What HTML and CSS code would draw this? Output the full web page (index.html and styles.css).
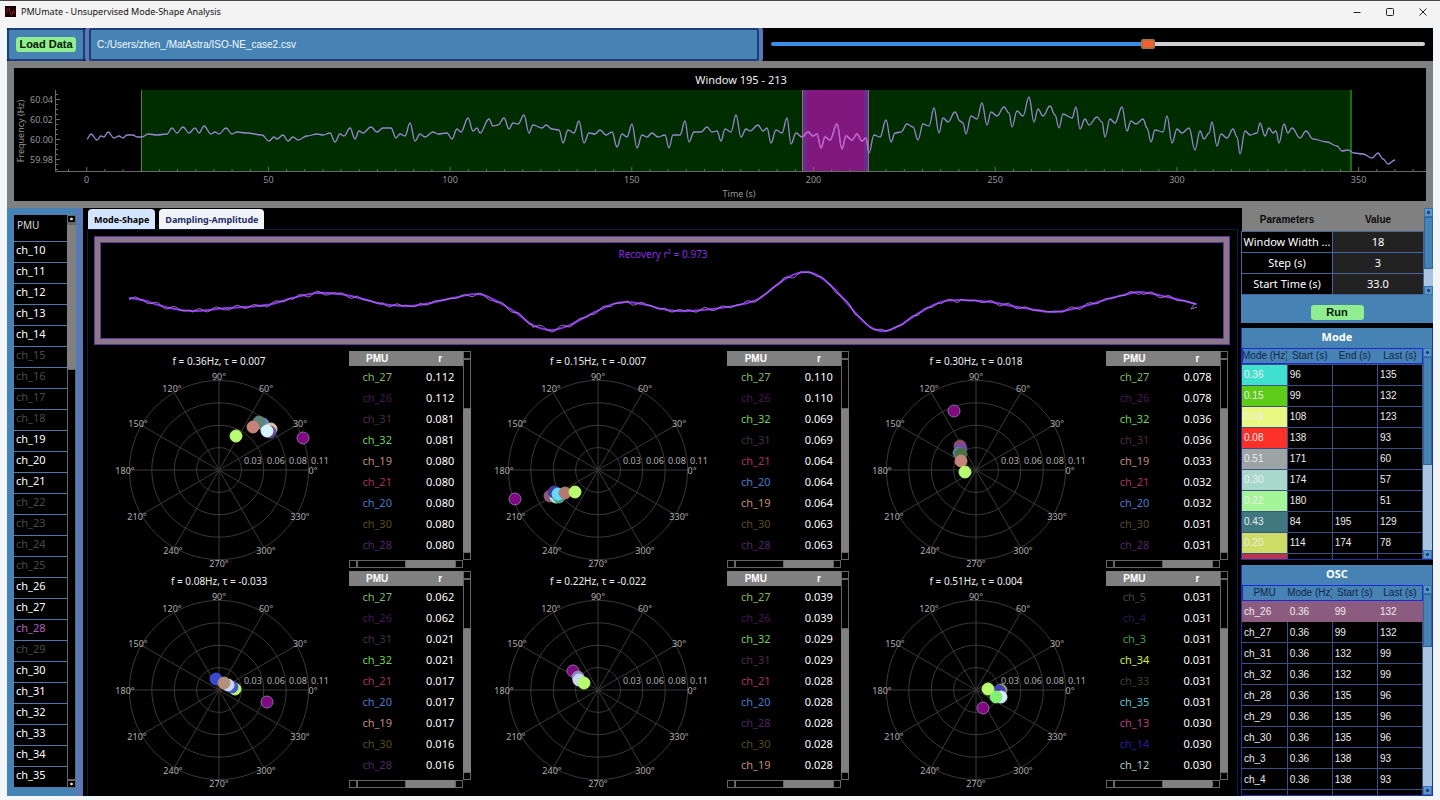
FILE: index.html
```html
<!DOCTYPE html>
<html lang="en">
<head>
<meta charset="UTF-8">
<meta name="viewport" content="width=device-width, initial-scale=1.0">
<title>PMUmate - Unsupervised Mode-Shape Analysis</title>
<link rel="stylesheet" href="styles.css">
</head>
<body>
<header class="titlebar">
    <svg class="app-icon" viewBox="0 0 12 12"><rect width="12" height="12" fill="#100000"/><path d="M1 8 C2 8 2 2 4 2 S5 10 7 10 S8 5 9 5 S10 8 11 8" fill="none" stroke="#b01822"/></svg>
    <h1 class="app-title">PMUmate - Unsupervised Mode-Shape Analysis</h1>
    <button class="win-btn" aria-label="Minimize"><svg viewBox="0 0 10 10"><path d="M1.500 5.500H8.500"/></svg></button>
    <button class="win-btn" aria-label="Maximize"><svg viewBox="0 0 10 10"><rect x="1.500" y="1.500" width="7" height="7" rx="1"/></svg></button>
    <button class="win-btn" aria-label="Close"><svg viewBox="0 0 10 10"><path d="M1.500 1.500L8.500 8.500M8.500 1.500L1.500 8.500"/></svg></button>
</header>
<div class="app">
    <div class="toolbar">
        <div class="load-box"><button class="green-btn">Load Data</button></div>
        <input class="path" type="text" aria-label="Data file" value="C:/Users/zhen_/MatAstra/ISO-NE_case2.csv" readonly>
        <div class="slider-box"><input class="slider" type="range" aria-label="Window start" min="0" max="337" value="195"></div>
    </div>

    <div class="signal">
        <svg id="signal" viewBox="14 68 1412 133" role="img" aria-label="Frequency over time"></svg>
    </div>

    <div class="content">
        <aside class="channels">
            <table class="channel-table">
                <thead><tr><th>PMU</th></tr></thead>
                <tbody id="channels"></tbody>
            </table>
            <div class="vscroll gray"><i class="knob dot"></i><i class="space"></i><i class="thumb channels-thumb"></i><i class="space grow"></i><i class="knob dot"></i></div>
        </aside>

        <main class="main">
            <div class="tabs" role="tablist">
                <button class="tab active" role="tab" aria-selected="true">Mode-Shape</button>
                <button class="tab" role="tab" aria-selected="false">Dampling-Amplitude</button>
            </div>
            <div class="pane">
                <div class="recovery">
                    <svg id="recovery" viewBox="102 243 1120 95" role="img" aria-label="Recovered signal"></svg>
                </div>
                <div class="modes" id="modes"></div>
            </div>
        </main>

        <aside class="side">
            <section class="params">
                <div class="scroll-area">
                    <table class="params-table">
                        <thead><tr><th>Parameters</th><th>Value</th></tr></thead>
                        <tbody>
                            <tr><td>Window Width ...</td><td>18</td></tr>
                            <tr><td>Step (s)</td><td>3</td></tr>
                            <tr><td>Start Time (s)</td><td>33.0</td></tr>
                        </tbody>
                    </table>
                    <div class="vscroll blue"><i class="knob"></i><i class="thumb params-thumb"></i><i class="space grow"></i><i class="knob"></i></div>
                </div>
                <div class="run-box"><button class="green-btn run">Run</button></div>
            </section>

            <section class="panel">
                <h2>Mode</h2>
                <div class="scroll-area">
                    <table class="grid-table">
                        <thead><tr><th>Mode (Hz)</th><th>Start (s)</th><th>End (s)</th><th>Last (s)</th></tr></thead>
                        <tbody id="modeRows"></tbody>
                    </table>
                    <div class="vscroll blue"><i class="knob"></i><i class="thumb mode-thumb"></i><i class="space grow"></i><i class="knob"></i></div>
                </div>
            </section>

            <section class="panel">
                <h2>OSC</h2>
                <div class="scroll-area">
                    <table class="grid-table">
                        <thead><tr><th>PMU</th><th>Mode (Hz)</th><th>Start (s)</th><th>Last (s)</th></tr></thead>
                        <tbody id="oscRows"></tbody>
                    </table>
                    <div class="vscroll blue"><i class="knob"></i><i class="thumb osc-thumb"></i><i class="space grow"></i><i class="knob"></i></div>
                </div>
            </section>
        </aside>
    </div>
</div>
<script src="script.js"></script>
</body>
</html>
```
FILE: styles.css
```css
* {
    box-sizing: border-box;
}
body {
    margin: 0;
    height: 100vh;
    display: flex;
    flex-direction: column;
    overflow: hidden;
    background: #f3f6f8;
    color: #fff;
    font-family: "Noto Sans", "Open Sans", sans-serif;
    font-size: 11px;
}
button, input {
    font-family: inherit;
    margin: 0;
}
svg {
    display: block;
}

/* title bar */
.titlebar {
    display: flex;
    align-items: center;
    height: 28px;
    padding: 0 8px 6px 5px;
    border-top: 1px solid #4a4648;
    background: #f3f3f3;
    color: #111;
}
.app-icon {
    width: 11px;
    height: 11px;
}
.app-title {
    flex: 1;
    margin: 0 0 0 5px;
    font-size: 9px;
    font-weight: normal;
}
.win-btn {
    width: 33px;
    height: 20px;
    padding: 0;
    border: none;
    background: none;
    display: flex;
    align-items: center;
    justify-content: center;
}
.win-btn:last-child {
    width: 18px;
    margin-left: 8px;
}
.win-btn svg {
    width: 10px;
    height: 10px;
    fill: none;
    stroke: #222;
}

.app {
    flex: 1;
    min-height: 0;
    display: flex;
    flex-direction: column;
    margin: 0 7px 4px;
    background: #000;
}

/* toolbar */
.toolbar {
    display: flex;
    height: 33px;
    background: #000;
}
.load-box {
    display: flex;
    align-items: center;
    justify-content: center;
    width: 78px;
    background: #4682b4;
    border: 2px solid #1c3e78;
    border-radius: 3px;
}
.green-btn {
    padding: 0 3px;
    height: 15px;
    line-height: 15px;
    border: none;
    border-radius: 3px;
    background: #90ee90;
    color: #031a08;
    font-family: "Liberation Sans", sans-serif;
    font-size: 11px;
    font-weight: bold;
}
.path {
    flex: 670;
    min-width: 0;
    margin: 0 4px;
    padding: 0 6px;
    background: #4682b4;
    border: 2px solid #1c3e78;
    border-radius: 3px;
    outline: 4px solid #5b78b6;
    clip-path: inset(0 -4px);
    color: #f2fbff;
    font-family: "Liberation Sans", sans-serif;
    font-size: 10px;
}
.slider-box {
    flex: 670;
    display: flex;
    align-items: center;
    padding: 0 8px 2px;
    background: #000;
}
.slider {
    -webkit-appearance: none;
    appearance: none;
    width: 100%;
    height: 4px;
    border-radius: 2px;
    background: linear-gradient(to right, #3b8ee8 58%, #d0d0d0 58%);
}
.slider::-webkit-slider-thumb {
    -webkit-appearance: none;
    width: 14px;
    height: 10px;
    border: 2px solid #a07a34;
    border-radius: 2px;
    background: #ff5a36;
}

/* signal chart */
.signal {
    padding: 7px;
    background: #808080;
}
.signal svg {
    width: 100%;
    background: #000;
}
.axis {
    fill: none;
    stroke: #6a6a6a;
}
.tick-text {
    fill: #969696;
    font-size: 9px;
    text-anchor: middle;
}
.tick-text.end {
    text-anchor: end;
}
.chart-title {
    fill: #f0f0f0;
    font-size: 11px;
    text-anchor: middle;
}
.trace {
    fill: none;
    stroke: #9488cc;
    stroke-width: 1.3;
}
.trace.pink {
    stroke: #c75fcf;
}

.content {
    flex: 1;
    min-height: 0;
    display: flex;
}

/* scroll bars */
.vscroll, .hscroll {
    display: flex;
    flex: none;
}
.vscroll {
    flex-direction: column;
    width: 9px;
}
.vscroll i, .hscroll i {
    display: block;
    flex: none;
}
.vscroll .grow, .hscroll .grow {
    flex: 1;
}
.knob {
    width: 8px;
    height: 8px;
    border: 1px solid #666;
}
.gray {
    background: #000;
}
.gray .space {
    border: 1px solid #666;
}
.gray .thumb {
    background: #808080;
}
.gray .dot {
    width: 9px;
    background: radial-gradient(#ddd 1px, #000 2px);
}
.channels-thumb {
    height: 144px;
}
.blue {
    background: #a8c4de;
}
.blue .knob {
    width: 9px;
    height: 9px;
    border-color: #3a72b0;
    background: radial-gradient(#123a6a 1px, #5a94c8 2px);
}
.blue .thumb {
    background: #4682b4;
    border: 1px solid #2e6498;
}
.params-thumb {
    height: 52px;
}
.mode-thumb {
    height: 108px;
}
.osc-thumb {
    height: 53px;
}

/* channel list */
.channels {
    display: flex;
    width: 76px;
    padding: 7px 7px 8px;
    background: linear-gradient(to right, #4682b4 85%, #5b78b6 95%);
}
.channel-table {
    flex: 1;
    align-self: flex-start;
    border-collapse: collapse;
    background: #000;
}
.channel-table th {
    height: 26px;
    padding: 0 3px 6px;
    text-align: left;
    font-weight: normal;
    font-size: 10px;
    color: #ddd;
}
.channel-table td {
    height: 21px;
    padding: 0 2px 4px;
    border-top: 1px solid #5078b0;
    border-bottom: 1px solid #5078b0;
    line-height: 15px;
}
.channel-table .off {
    color: #4a4a4a;
}
.channel-table .picked {
    color: #b45fc4;
}

/* tabs */
.main {
    flex: 1;
    min-width: 0;
    padding: 1px 0 0 4px;
}
.tabs {
    display: flex;
    gap: 4px;
    padding-left: 1px;
}
.tab {
    height: 20px;
    padding: 0 6px;
    border: none;
    border-radius: 4px 4px 0 0;
    background: #f0f4f8;
    color: #1e2c66;
    font-size: 9px;
    font-weight: bold;
}
.tab.active {
    background: #d4e6ff;
    color: #000;
}
.pane {
    height: calc(100% - 20px);
    margin-right: 3px;
    padding: 6px 7px 0 6px;
    border: 1px solid #121a38;
    border-bottom: none;
}
.recovery {
    padding: 6px;
    border: 1px solid #5c38a0;
    background: #8c7888;
}
.recovery svg {
    width: 100%;
    background: #000;
    outline: 1px solid #5c38a0;
}
.recovery text {
    fill: #8a2be2;
    font-size: 10px;
    text-anchor: middle;
}
.fit {
    fill: none;
    stroke: #8a35e8;
    stroke-width: 2;
}
.raw {
    fill: none;
    stroke: #b48ae0;
    stroke-width: 0.8;
}

/* mode cells */
.modes {
    display: grid;
    grid-template-columns: repeat(3, 1fr);
    grid-auto-rows: 220px;
    margin-top: 5px;
}
.mode {
    display: flex;
    justify-content: space-between;
    margin-right: 2px;
}
.polar {
    flex: 1;
    min-width: 0;
    height: 220px;
}
.polar .ring {
    fill: none;
    stroke: #3a3a3a;
}
.polar .label {
    fill: #b0b0b0;
    font-size: 9px;
    text-anchor: middle;
}
.polar .title {
    fill: #eee;
    font-size: 10px;
    text-anchor: middle;
}
.result {
    width: 122px;
    padding-top: 1px;
}
.result-body {
    display: flex;
    height: 209px;
}
.result table {
    width: 114px;
    border-collapse: collapse;
    table-layout: fixed;
    align-self: flex-start;
}
.result th {
    height: 15px;
    padding: 0;
    background: #808080;
    font-family: "Liberation Sans", sans-serif;
    font-size: 10px;
    line-height: 14px;
}
.result td {
    height: 21px;
    padding: 0;
    text-align: center;
}
.result th:last-child, .result td:last-child {
    padding-left: 12px;
}
.result .vscroll {
    width: 8px;
}
.result .vscroll .thumb {
    height: 143px;
}
.hscroll {
    width: 114px;
    height: 8px;
}
.hscroll .thumb {
    width: 49px;
    height: 8px;
}

/* right column */
.side {
    display: flex;
    flex-direction: column;
    gap: 5px;
    width: 192px;
}
.scroll-area {
    flex: 1;
    min-height: 0;
    display: flex;
    align-items: stretch;
    overflow: hidden;
}
.params .scroll-area {
    height: 87px;
}
.params-table, .grid-table {
    width: calc(100% - 9px);
    align-self: flex-start;
    border-collapse: collapse;
    table-layout: fixed;
}
.params-table th {
    height: 23px;
    padding: 0;
    background: #808080;
    color: #0a0a0a;
    font-family: "Liberation Sans", sans-serif;
    font-size: 10px;
}
.params-table td {
    height: 21px;
    padding: 0;
    border: 1px solid #46659a;
    text-align: center;
    line-height: 15px;
    white-space: nowrap;
}
.params-table td:last-child {
    background: #222;
}
.run-box {
    display: flex;
    justify-content: center;
    padding: 10px 0 3px;
    background: #4682b4;
}
.run {
    width: 53px;
}
.panel {
    flex: 1 1 0;
    min-height: 0;
    display: flex;
    flex-direction: column;
    overflow: hidden;
    background: #000;
    border: 1px solid #2430a8;
    border-top: none;
}
.panel h2 {
    margin: 0;
    height: 20px;
    line-height: 18px;
    background: #4682b4;
    text-align: center;
    font-size: 11px;
}
.grid-table {
    font-family: "Liberation Sans", sans-serif;
    font-size: 10px;
}
.grid-table th {
    height: 16px;
    padding: 0;
    overflow: hidden;
    white-space: nowrap;
    background: #4682b4;
    color: #12264a;
    font-weight: normal;
    line-height: 13px;
}
.grid-table thead {
    outline: 1px solid #1c28d8;
    outline-offset: -1px;
}
.grid-table td {
    height: 21px;
    padding: 0 2px;
    border: 1px solid #3e4f86;
    color: #eee;
    line-height: 13px;
}
.grid-table td:first-child {
    border-left: none;
}
.grid-table .selected td {
    background: #8c5c80;
    border-color: #8c5c80;
}
```
FILE: script.js
```js
const signalPoints = [
    87,139, 91,134, 97,140, 101,136, 104,137, 108,132, 114,138, 119,136, 123,138, 127,135, 133,135, 137,137, 142,137,
    148,134, 157,135, 167,134, 172,128, 177,133, 183,127, 189,133, 195,128, 199,133, 204,126, 211,134, 215,132, 219,134,
    226,128, 232,134, 237,132, 247,133, 262,135, 269,141, 274,137, 277,139, 283,135, 288,141, 293,137, 298,140, 307,136,
    317,134, 323,135, 330,133, 335,142, 340,134, 344,136, 350,128, 355,139, 359,131, 363,133, 371,127, 377,132, 383,128,
    391,128, 396,138, 400,134, 405,136, 410,123, 415,141, 420,134, 425,137, 433,132, 438,134, 447,133, 452,139, 457,129,
    461,132, 468,118, 473,131, 477,128, 480,133, 489,119, 493,126, 498,125, 504,118, 509,129, 513,123, 518,124, 524,115,
    529,133, 533,125, 542,128, 546,125, 552,129, 559,130, 563,143, 568,130, 574,133, 579,121, 584,143, 589,133, 595,134,
    600,130, 606,135, 612,132, 617,147, 622,134, 627,137, 632,124, 637,148, 642,135, 647,137, 652,133, 658,137, 665,135,
    669,148, 673,135, 680,135, 685,121, 689,142, 694,132, 701,132, 707,127, 712,132, 717,131, 721,141, 725,129, 731,132,
    736,115, 741,137, 746,129, 750,131, 758,125, 763,131, 767,128, 771,143, 776,130, 782,133, 787,118, 791,144, 796,133,
    802,137, 808,132, 813,136, 817,134, 821,148, 825,137, 830,140, 837,124, 842,149, 846,136, 852,140, 857,134, 862,141,
    866,138, 869,153, 874,135, 880,137, 886,120, 891,142, 895,133, 901,132, 907,124, 913,127, 918,140, 923,124, 929,126,
    934,108, 939,133, 943,118, 948,122, 955,112, 960,121, 963,123, 966,134, 971,116, 977,119, 982,103, 987,125, 991,112,
    997,116, 1004,107, 1009,113, 1012,127, 1017,111, 1023,116, 1029,97, 1034,122, 1038,109, 1043,116, 1050,106, 1055,115,
    1059,128, 1063,114, 1072,118, 1076,107, 1080,129, 1085,119, 1089,125, 1097,117, 1102,122, 1105,137, 1110,119, 1115,123,
    1122,107, 1127,131, 1131,121, 1136,124, 1143,119, 1147,128, 1151,142, 1155,130, 1163,132, 1167,116, 1172,143, 1177,129,
    1182,133, 1189,128, 1195,150, 1200,131, 1204,139, 1209,133, 1212,122, 1217,146, 1221,134, 1227,138, 1233,129, 1237,137,
    1240,154, 1245,131, 1250,135, 1257,133, 1260,123, 1265,136, 1269,128, 1273,133, 1276,131, 1279,143, 1284,124, 1288,133,
    1292,128, 1300,138, 1306,131, 1313,139, 1327,142, 1337,146, 1342,151, 1348,150, 1354,153, 1363,154, 1372,158, 1378,153,
    1383,159, 1388,164, 1395,160
];

const recoveryPoints = [
    130,298, 143,300, 167,307, 193,311, 227,308, 267,305, 293,298, 317,293, 340,294, 360,298, 383,304, 403,306, 420,305,
    453,298, 477,294, 493,299, 517,313, 533,325, 552,330, 570,325, 593,313, 613,304, 627,302, 647,305, 667,310, 687,311,
    720,308, 743,304, 760,298, 783,280, 803,272, 817,275, 830,285, 840,295, 857,315, 870,327, 885,331, 900,325, 920,312,
    940,302, 960,300, 990,302, 1023,308, 1053,312, 1080,307, 1107,299, 1127,294, 1140,292, 1167,297, 1196,304
];

const channelColors = {
    ch_27: '#83b860', ch_26: '#481655', ch_31: '#4a2c46', ch_32: '#6fd05a', ch_19: '#c48c7a', ch_21: '#a8325c',
    ch_20: '#4a7ccc', ch_30: '#5a4c1c', ch_28: '#502668', ch_5: '#3c4a42', ch_4: '#261a50', ch_3: '#4aa04a',
    ch_34: '#d0f050', ch_33: '#3c4428', ch_35: '#58c8d8', ch_13: '#b84080', ch_14: '#2a1aa4', ch_12: '#a8d0c0'
};

// dots are offsets from the centre of the polar plot
const modes = [
    {
        title: 'f = 0.36Hz, τ = 0.007',
        dots: [[44, -46, '#6d88c0'], [40, -48, '#5e8574'], [34, -43, '#c4847a'], [52, -41, '#d8c8a8'], [51, -38, '#6a4a90'], [48, -39, '#d8f4ff'], [17, -34, '#b8fa70'], [84, -32, '#800a80']],
        rows: ['27 0.112', '26 0.112', '31 0.081', '32 0.081', '19 0.080', '21 0.080', '20 0.080', '30 0.080', '28 0.080']
    },
    {
        title: 'f = 0.15Hz, τ = -0.007',
        dots: [[-83, 29, '#800a80'], [-48, 26, '#8a5a78'], [-42, 27, '#b8e8d0'], [-39, 27, '#4ea088'], [-44, 22, '#4a3a98'], [-40, 24, '#60dcff'], [-33, 23, '#b4786e'], [-23, 22, '#b8fa70']],
        rows: ['27 0.110', '26 0.110', '32 0.069', '31 0.069', '21 0.064', '20 0.064', '19 0.064', '30 0.063', '28 0.063']
    },
    {
        title: 'f = 0.30Hz, τ = 0.018',
        dots: [[-22, -59, '#800a80'], [-16, -24, '#8a5060'], [-15, -21, '#7a48a8'], [-17, -17, '#5a7aa0'], [-15, -16, '#4a7045'], [-15, -9, '#c4847a'], [-11, 2, '#b8fa70']],
        rows: ['27 0.078', '26 0.078', '32 0.036', '31 0.036', '19 0.033', '21 0.032', '20 0.032', '30 0.031', '28 0.031']
    },
    {
        title: 'f = 0.08Hz, τ = -0.033',
        dots: [[-3, -11, '#3a4ad0'], [16, -1, '#b8fa70'], [13, -3, '#4a5ac0'], [9, -5, '#c8d8f8'], [5, -7, '#b4907a'], [48, 12, '#800a80']],
        rows: ['27 0.062', '26 0.062', '31 0.021', '32 0.021', '21 0.017', '20 0.017', '19 0.017', '30 0.016', '28 0.016']
    },
    {
        title: 'f = 0.22Hz, τ = -0.022',
        dots: [[-25, -19, '#800a80'], [-20, -13, '#8a88b0'], [-19, -10, '#c8d8f0'], [-14, -7, '#b8fa70']],
        rows: ['27 0.039', '26 0.039', '32 0.029', '31 0.029', '21 0.028', '20 0.028', '28 0.028', '30 0.028', '19 0.028']
    },
    {
        title: 'f = 0.51Hz, τ = 0.004',
        dots: [[25, 0, '#8a9a78'], [23, 1, '#4040b0'], [25, 7, '#d8ecff'], [20, 7, '#80f070'], [12, -1, '#b8fa70'], [7, 18, '#800a80']],
        rows: ['5 0.031', '4 0.031', '3 0.031', '34 0.031', '33 0.031', '35 0.031', '13 0.030', '14 0.030', '12 0.030']
    }
];

const modeRows = [
    ['0.36', 96, '', 135, '#40e0d0'], ['0.15', 99, '', 132, '#5ccc18'], ['0.59', 108, '', 123, '#e8f880'],
    ['0.08', 138, '', 93, '#fc3028'], ['0.51', 171, '', 60, '#9ca4a4'], ['0.30', 174, '', 57, '#a8d8cc'],
    ['0.22', 180, '', 51, '#a4f498'], ['0.43', 84, 195, 129, '#407880'], ['0.20', 114, 174, 78, '#ccdc64'],
    ['', '', '', '', '#b83450']
];

const oscRows = [
    ['ch_26', '0.36', 99, 132], ['ch_27', '0.36', 99, 132], ['ch_31', '0.36', 132, 99], ['ch_32', '0.36', 132, 99],
    ['ch_28', '0.36', 135, 96], ['ch_29', '0.36', 135, 96], ['ch_30', '0.36', 135, 96], ['ch_3', '0.36', 138, 93],
    ['ch_4', '0.36', 138, 93], ['', '', '', '']
];

function pairs(flat) {
    const out = [];
    for (let i = 0; i < flat.length; i += 2) out.push([flat[i], flat[i + 1]]);
    return out;
}

// horizontal-tangent curve for peaky data, Catmull-Rom for the slow one
function smooth(points, flat) {
    let d = `M${points[0]}`;
    for (let i = 0; i < points.length - 1; i++) {
        const p0 = points[i - 1] || points[i], p1 = points[i], p2 = points[i + 1], p3 = points[i + 2] || p2;
        if (flat) {
            const w = (p2[0] - p1[0]) * 0.4;
            d += `C${p1[0] + w},${p1[1]} ${p2[0] - w},${p2[1]} ${p2}`;
        } else {
            d += `C${p1[0] + (p2[0] - p0[0]) / 6},${p1[1] + (p2[1] - p0[1]) / 6} ${p2[0] - (p3[0] - p1[0]) / 6},${p2[1] - (p3[1] - p1[1]) / 6} ${p2}`;
        }
    }
    return d;
}

function drawSignal() {
    const x = t => 86.7 + t * 3.634;
    let s = '<defs><clipPath id="win"><rect x="802" y="90" width="66" height="82"/></clipPath></defs>';
    s += '<rect x="141" y="90" width="1210" height="82" fill="#002d00"/>';
    s += '<path d="M141.5 90V172" stroke="#5c7a3c"/><path d="M1351 90V172" stroke="#1c6e08" stroke-width="2"/>';
    s += '<rect x="802" y="90" width="66" height="82" fill="#80187f"/>';
    s += '<path d="M805 90V171M866 90V171" stroke="#64308c" stroke-width="4"/>';
    s += '<path d="M802.5 90V172M868.5 90V172" stroke="#a06a78"/>';
    s += '<path class="axis" d="M55.5 90V171.5H1426"/>';
    for (let t = -5; t <= 365; t += 5) {
        s += `<path class="axis" d="M${x(t)} 171v${t % 50 ? -2 : -4}"/>`;
        if (t % 50 === 0) s += `<text class="tick-text" x="${x(t)}" y="183">${t}</text>`;
    }
    for (let i = 0; i < 16; i++) s += `<path class="axis" d="M56 ${94.5 + i * 5}h2"/>`;
    ['60.04', '60.02', '60.00', '59.98'].forEach((v, i) => {
        s += `<path class="axis" d="M56 ${99.5 + i * 20}h4"/><text class="tick-text end" x="53" y="${103 + i * 20}">${v}</text>`;
    });
    s += '<text class="tick-text" transform="translate(24 131) rotate(-90)">Frequency (Hz)</text>';
    s += '<text class="tick-text" x="739" y="197">Time (s)</text>';
    s += '<text class="chart-title" x="741" y="84">Window 195 - 213</text>';
    const d = smooth(pairs(signalPoints), true);
    s += `<path class="trace" d="${d}"/><path class="trace pink" clip-path="url(#win)" d="${d}"/>`;
    document.getElementById('signal').innerHTML = s;
}

function drawRecovery() {
    const points = pairs(recoveryPoints);
    const raw = [];
    for (let i = 0; i < points.length - 1; i++) {
        const [x1, y1] = points[i], [x2, y2] = points[i + 1];
        for (let x = x1; x < x2; x += 3) {
            raw.push([x, y1 + (y2 - y1) * (x - x1) / (x2 - x1) + 1.2 * Math.sin(x * 1.7) + Math.sin(x * 0.31)]);
        }
    }
    raw.push([1190, 309], [1196, 307]);
    document.getElementById('recovery').innerHTML =
        `<path class="fit" d="${smooth(points, false)}"/><path class="raw" d="M${raw.join('L')}"/>` +
        '<text x="663" y="258">Recovery r² = 0.973</text>';
}

function polar(mode) {
    const labels = [[0, 94, 1], [30, 81, -46], [60, 47, -81], [90, 0, -93], [120, -47, -81], [150, -81, -46], [180, -94, 1],
        [210, -82, 47], [240, -46, 81], [270, 0, 94], [300, 47, 81], [330, 81, 47]];
    let s = '';
    for (const r of [22.4, 44.8, 67.2, 89.6]) s += `<circle class="ring" r="${r}"/>`;
    for (let a = 0; a < 180; a += 30) {
        const c = 89.6 * Math.cos(a * Math.PI / 180), n = 89.6 * Math.sin(a * Math.PI / 180);
        s += `<path class="ring" d="M${-c} ${n}L${c} ${-n}"/>`;
    }
    for (const [a, x, y] of labels) s += `<text class="label" x="${x}" y="${y + 3}">${a}°</text>`;
    for (const [x, y, c] of mode.dots) {
        s += `<circle cx="${x}" cy="${y}" r="6" fill="${c}" stroke="${c === '#800a80' ? '#8a6aa8' : c}"/>`;
    }
    ['0.03', '0.06', '0.08', '0.11'].forEach((v, i) => {
        s += `<text class="label" x="${[34, 57, 79, 101][i]}" y="-6">${v}</text>`;
    });
    return `<svg class="polar" viewBox="-125 -120 250 220" preserveAspectRatio="xMinYMin">${s}<text class="title" x="0" y="-105">${mode.title}</text></svg>`;
}

function drawModes() {
    document.getElementById('modes').innerHTML = modes.map(mode => {
        const rows = mode.rows.map(row => {
            const [n, r] = row.split(' ');
            return `<tr><td style="color:${channelColors['ch_' + n]}">ch_${n}</td><td>${r}</td></tr>`;
        }).join('');
        return `<div class="mode">${polar(mode)}<div class="result">
            <div class="result-body"><table><thead><tr><th>PMU</th><th>r</th></tr></thead><tbody>${rows}</tbody></table>
            <div class="vscroll gray"><i class="knob"></i><i class="space grow"></i><i class="thumb"></i><i class="knob"></i></div></div>
            <div class="hscroll gray"><i class="knob"></i><i class="space grow"></i><i class="thumb"></i><i class="knob"></i></div>
        </div></div>`;
    }).join('');
}

function fillTables() {
    const off = [15, 16, 17, 18, 22, 23, 24, 25, 29];
    let s = '';
    for (let n = 10; n <= 35; n++) {
        const name = n === 28 ? 'picked' : off.includes(n) ? 'off' : 'on';
        s += `<tr><td class="${name}">ch_${n}</td></tr>`;
    }
    document.getElementById('channels').innerHTML = s;
    document.getElementById('modeRows').innerHTML = modeRows.map(r =>
        `<tr><td style="background:${r[4]}">${r[0]}</td><td>${r[1]}</td><td>${r[2]}</td><td>${r[3]}</td></tr>`).join('');
    document.getElementById('oscRows').innerHTML = oscRows.map((r, i) =>
        `<tr class="${i === 0 ? 'selected' : ''}">${r.map(v => `<td>${v}</td>`).join('')}</tr>`).join('');
}

drawSignal();
drawRecovery();
drawModes();
fillTables();
```
